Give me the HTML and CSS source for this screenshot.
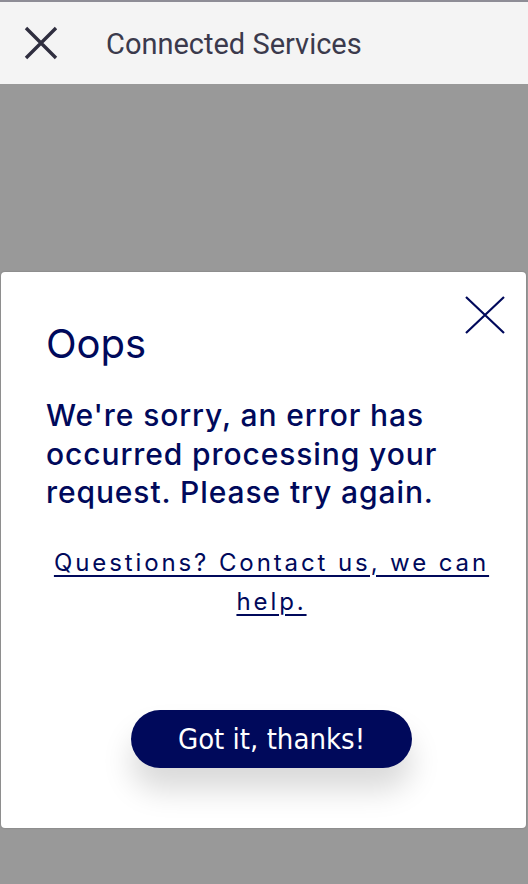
FILE: index.html
```html
<!DOCTYPE html>
<html>
<head>
  <meta charset="UTF-8">
  <title>Connected Services</title>
  <link rel="stylesheet" href="styles.css">
</head>
<body>
  <div class="app">
    <header class="topbar">
      <button class="topbar-close" aria-label="Close">
        <svg width="34" height="34" viewBox="0 0 34 34">
          <path d="M2 2 L32 32 M32 2 L2 32" stroke="#2f2e3f" stroke-width="3.4" fill="none"/>
        </svg>
      </button>
      <h1 class="topbar-title">Connected Services</h1>
    </header>

    <div class="overlay">
      <div class="dialog">
        <div class="dialog-head">
          <h2 class="dialog-title">Oops</h2>
          <button class="dialog-close" aria-label="Close">
            <svg width="40" height="38" viewBox="0 0 40 38">
              <path d="M1 1 L39 37 M39 1 L1 37" stroke="#00095b" stroke-width="2.2" fill="none"/>
            </svg>
          </button>
        </div>
        <p class="dialog-text">We're sorry, an error has occurred processing your request. Please try again.</p>
        <p class="dialog-link"><a href="#">Questions? Contact us, we can help.</a></p>
        <div class="dialog-actions">
          <button class="btn-primary">Got it, thanks!</button>
        </div>
      </div>
    </div>
  </div>
</body>
</html>
```

FILE: styles.css
```css
body {
  margin: 0;
  background: #999999;
  font-family: Inter, "Noto Sans", sans-serif;
}
.app {
  width: 528px;
  height: 884px;
  display: flex;
  flex-direction: column;
  border-top: 2px solid #8e8d96;
  box-sizing: border-box;
}
.topbar {
  height: 82px;
  background: #f4f4f4;
  display: flex;
  align-items: center;
  padding-left: 24px;
  flex-shrink: 0;
}
.topbar-close {
  border: none;
  background: none;
  padding: 0;
  width: 34px;
  height: 34px;
  display: flex;
}
.topbar-title {
  margin: 2px 0 0 48px;
  font-family: Roboto, sans-serif;
  font-weight: 400;
  font-size: 29px;
  color: #3b3a4c;
}
.overlay {
  flex: 1;
  background: #999999;
  padding: 188px 2px 0 1px;
}
.dialog {
  background: #ffffff;
  height: 556px;
  border-radius: 4px;
  box-shadow: 0 0 2px rgba(0, 0, 0, 0.25);
  padding: 24px 21px 0 45px;
  box-sizing: border-box;
  color: #00095b;
}
.dialog-head {
  display: flex;
  justify-content: space-between;
  align-items: flex-start;
}
.dialog-title {
  margin: 24px 0 0 0;
  font-size: 40px;
  font-weight: 400;
  line-height: 48px;
}
.dialog-close {
  border: none;
  background: none;
  padding: 0;
  width: 40px;
  height: 38px;
  display: flex;
}
.dialog-text {
  margin: 28px 0 0 0;
  max-width: 420px;
  font-size: 30px;
  font-weight: 500;
  line-height: 38.5px;
  letter-spacing: 0.9px;
}
.dialog-link {
  margin: 31px 8px 0 0;
  text-align: center;
  font-size: 24px;
  line-height: 39px;
  letter-spacing: 2.9px;
}
.dialog-link a {
  color: #00095b;
  text-decoration: underline;
  text-underline-offset: 4px;
  text-decoration-thickness: 1.5px;
}
.dialog-actions {
  display: flex;
  justify-content: center;
  margin: 89px 8px 0 0;
}
.btn-primary {
  width: 281px;
  height: 58px;
  border: none;
  border-radius: 29px;
  background: #00095b;
  color: #ffffff;
  font-family: "DejaVu Sans Condensed", "DejaVu Sans", sans-serif;
  font-stretch: condensed;
  font-size: 29px;
  box-shadow: 0 22px 30px rgba(0, 0, 0, 0.15);
}
```
